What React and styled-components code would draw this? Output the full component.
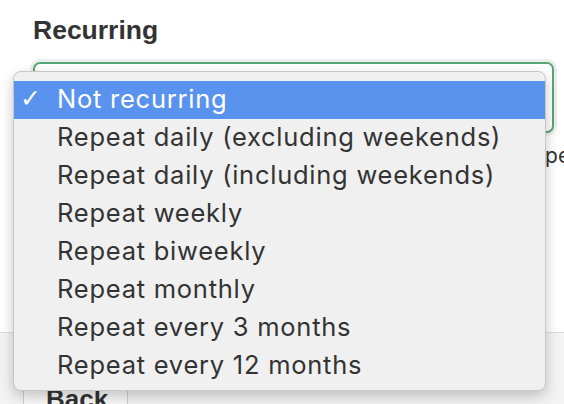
import React from "react";
import styled, { createGlobalStyle } from "styled-components";

const GlobalStyle = createGlobalStyle`
  html, body {
    margin: 0;
    padding: 0;
    background: #fff;
  }
  body {
    font-family: "Liberation Sans", Arial, sans-serif;
  }
`;

const Page = styled.div`
  position: relative;
  width: 564px;
  height: 404px;
  overflow: hidden;
  display: flex;
  flex-direction: column;
  background: #fff;
`;

const FormSection = styled.div`
  flex-shrink: 0;
  display: flex;
  flex-direction: column;
  padding: 14px 10px 0 33px;
  height: 332px;
  box-sizing: border-box;
`;

const Label = styled.div`
  font-family: "Liberation Sans", Arial, sans-serif;
  font-weight: 700;
  font-size: 26.5px;
  color: #333;
  line-height: 32px;
`;

const SelectBox = styled.div`
  flex-shrink: 0;
  margin-top: 16px;
  height: 71px;
  box-sizing: border-box;
  border: 2px solid #56a777;
  border-radius: 7px;
  background: #fff;
  box-shadow: 0 0 0 3px rgba(0, 0, 0, 0.07);
`;

const Helper = styled.div`
  margin-top: 10px;
  margin-right: -35px;
  text-align: right;
  font-family: "Inter", "Liberation Sans", sans-serif;
  font-size: 21px;
  line-height: 26px;
  color: #333;
  white-space: nowrap;
`;

const Footer = styled.div`
  flex-shrink: 0;
  height: 120px;
  border-top: 1px solid #dcdcdc;
  background: #f3f3f3;
  padding: 42px 0 0 23px;
`;

const BackButton = styled.button`
  width: 105px;
  height: 50px;
  border: 1px solid #cfcfcf;
  border-radius: 3px;
  background: #f8f8f8;
  font-family: "Liberation Sans", Arial, sans-serif;
  font-weight: 700;
  font-size: 26px;
  color: #333;
  display: flex;
  align-items: flex-start;
  padding: 8px 0 0 22px;
`;

const Menu = styled.ul`
  position: absolute;
  left: 13px;
  top: 71px;
  width: 533px;
  height: 320px;
  box-sizing: border-box;
  margin: 0;
  padding: 9px 0 0;
  list-style: none;
  background: #f0f0f0;
  border: 1px solid #c6c6c6;
  border-radius: 8px;
  box-shadow: 0 5px 14px rgba(0, 0, 0, 0.22);
  overflow: hidden;
`;

const Item = styled.li`
  position: relative;
  height: 38px;
  box-sizing: border-box;
  display: flex;
  align-items: center;
  padding: 0 0 3px 43px;
  font-family: "Inter", "Liberation Sans", sans-serif;
  font-size: 25.5px;
  letter-spacing: 0.75px;
  color: ${(p) => (p.$active ? "#fff" : "#333")};
  background: ${(p) => (p.$active ? "#5a93ee" : "transparent")};
  white-space: nowrap;
`;

const Check = styled.span`
  position: absolute;
  left: 6px;
  top: 50%;
  transform: translateY(-55%);
  font-family: "DejaVu Sans", sans-serif;
  font-size: 25px;
`;

const options = [
  "Not recurring",
  "Repeat daily (excluding weekends)",
  "Repeat daily (including weekends)",
  "Repeat weekly",
  "Repeat biweekly",
  "Repeat monthly",
  "Repeat every 3 months",
  "Repeat every 12 months",
];

export default function App() {
  return (
    <Page>
      <GlobalStyle />
      <FormSection>
        <Label>Recurring</Label>
        <SelectBox />
        <Helper>Choose how often this event will repeat</Helper>
      </FormSection>
      <Footer>
        <BackButton>Back</BackButton>
      </Footer>
      <Menu>
        {options.map((o, i) => (
          <Item key={o} $active={i === 0}>
            {i === 0 && <Check>✓</Check>}
            {o}
          </Item>
        ))}
      </Menu>
    </Page>
  );
}
